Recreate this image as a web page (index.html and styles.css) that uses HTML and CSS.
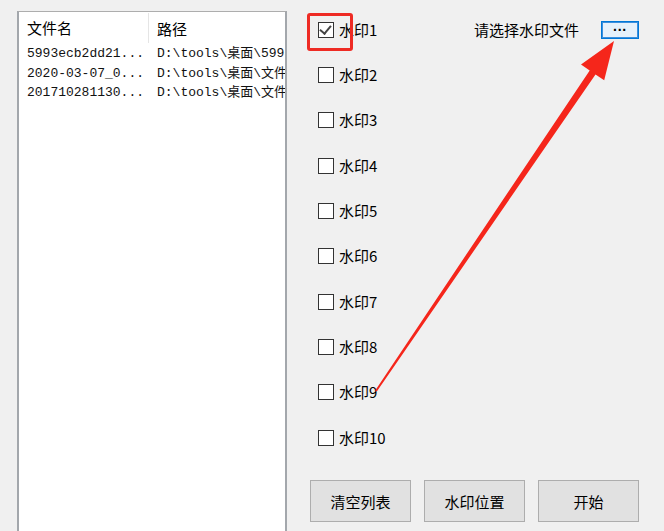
FILE: index.html
```html
<!DOCTYPE html>
<html lang="zh-CN">
<head>
    <meta charset="UTF-8">
    <title>水印工具</title>
    <link rel="stylesheet" href="styles.css">
</head>
<body>
    <div class="window">
        <div class="file-list">
            <div class="list-head">
                <div class="col-name">文件名</div>
                <div class="col-path">路径</div>
            </div>
            <div class="list-row">
                <div class="col-name">5993ecb2dd21...</div>
                <div class="col-path">D:\tools\桌面\5993ecb2dd21.png</div>
            </div>
            <div class="list-row">
                <div class="col-name">2020-03-07_0...</div>
                <div class="col-path">D:\tools\桌面\文件\2020-03-07_0.png</div>
            </div>
            <div class="list-row">
                <div class="col-name">201710281130...</div>
                <div class="col-path">D:\tools\桌面\文件\201710281130.png</div>
            </div>
        </div>

        <div class="panel">
            <div class="checks">
                <div class="check-row">
                    <label class="check"><span class="box checked"></span>水印1</label>
                    <span class="choose-text">请选择水印文件</span>
                    <button class="dots-btn">···</button>
                </div>
                <div class="check-row"><label class="check"><span class="box"></span>水印2</label></div>
                <div class="check-row"><label class="check"><span class="box"></span>水印3</label></div>
                <div class="check-row"><label class="check"><span class="box"></span>水印4</label></div>
                <div class="check-row"><label class="check"><span class="box"></span>水印5</label></div>
                <div class="check-row"><label class="check"><span class="box"></span>水印6</label></div>
                <div class="check-row"><label class="check"><span class="box"></span>水印7</label></div>
                <div class="check-row"><label class="check"><span class="box"></span>水印8</label></div>
                <div class="check-row"><label class="check"><span class="box"></span>水印9</label></div>
                <div class="check-row"><label class="check"><span class="box"></span>水印10</label></div>
            </div>
            <div class="actions">
                <button class="btn">清空列表</button>
                <button class="btn">水印位置</button>
                <button class="btn">开始</button>
            </div>
        </div>
    </div>

    <!-- annotation overlay -->
    <div class="mark-box"></div>
    <svg class="arrow" width="664" height="531" viewBox="0 0 664 531">
        <polygon points="375.2,390.4 589.7,70.4 581,64.5 614,41 604.2,80.3 595.5,74.4 376.8,391.6" fill="#f5261b"/>
    </svg>
</body>
</html>
```

FILE: styles.css
```css
body {
    margin: 0;
    background-color: #f0f0f0;
    font-family: "Noto Sans CJK SC", "Microsoft YaHei", sans-serif;
    font-size: 15px;
    color: #000;
    width: 664px;
    height: 531px;
    overflow: hidden;
    position: relative;
}

.window {
    display: flex;
    height: 531px;
}

/* left list view */
.file-list {
    margin: 11px 0 0 17px;
    width: 266px;
    height: 540px;
    background-color: #fff;
    border-top: 1px solid #adadad;
    border-left: 2px solid #a3a7ac;
    border-right: 2px solid #a3a7ac;
    overflow: hidden;
}

.list-head {
    display: flex;
    height: 32px;
    align-items: center;
}

.list-head .col-name {
    border-right: 1px solid #e5e5e5;
    height: 30px;
    line-height: 30px;
}

.list-head .col-path {
    padding-left: 8px;
}

.col-name {
    width: 121px;
    flex-shrink: 0;
    padding-left: 8px;
    white-space: nowrap;
    overflow: hidden;
}

.col-path {
    padding-left: 9px;
    white-space: nowrap;
    overflow: hidden;
}

.list-row {
    display: flex;
    height: 19.5px;
    line-height: 19.5px;
    font-family: "Liberation Mono", "Noto Sans CJK SC", monospace;
    font-size: 13px;
    color: #111;
}

/* right panel */
.panel {
    flex: 1;
    padding: 7px 25px 0 23px;
}

.checks {
    margin-left: 8px;
}

.check-row {
    display: flex;
    align-items: center;
    height: 45.33px;
}

.check {
    display: flex;
    align-items: center;
    gap: 5px;
    line-height: 16px;
}

.box {
    width: 14px;
    height: 14px;
    border: 1px solid #333;
    background-color: #fff;
    position: relative;
}

.box.checked::after {
    content: "";
    position: absolute;
    left: 3px;
    top: 0px;
    width: 5px;
    height: 9px;
    border-right: 2px solid #444;
    border-bottom: 2px solid #444;
    transform: rotate(40deg);
}

.choose-text {
    margin-left: auto;
}

.dots-btn {
    margin-left: 22px;
    width: 38px;
    height: 18px;
    padding: 0;
    background-color: #e5f1fb;
    border: 1px solid #0078d7;
    box-shadow: inset 0 0 0 1px #3c8fdd;
    font-family: "Liberation Sans", sans-serif;
    font-size: 14px;
    font-weight: bold;
    line-height: 14px;
    color: #000;
}

.actions {
    display: flex;
    gap: 13px;
    margin-top: 20px;
}

.btn {
    width: 101px;
    height: 42px;
    padding: 0;
    background-color: #e1e1e1;
    border: 1px solid #adadad;
    font-family: "Noto Sans CJK SC", sans-serif;
    font-size: 15px;
    color: #000;
}

/* annotations */
.mark-box {
    position: absolute;
    left: 307px;
    top: 13px;
    width: 40px;
    height: 32px;
    border: 3px solid #ee2b24;
    border-radius: 3px;
}

.arrow {
    position: absolute;
    left: 0;
    top: 0;
    pointer-events: none;
}
```
